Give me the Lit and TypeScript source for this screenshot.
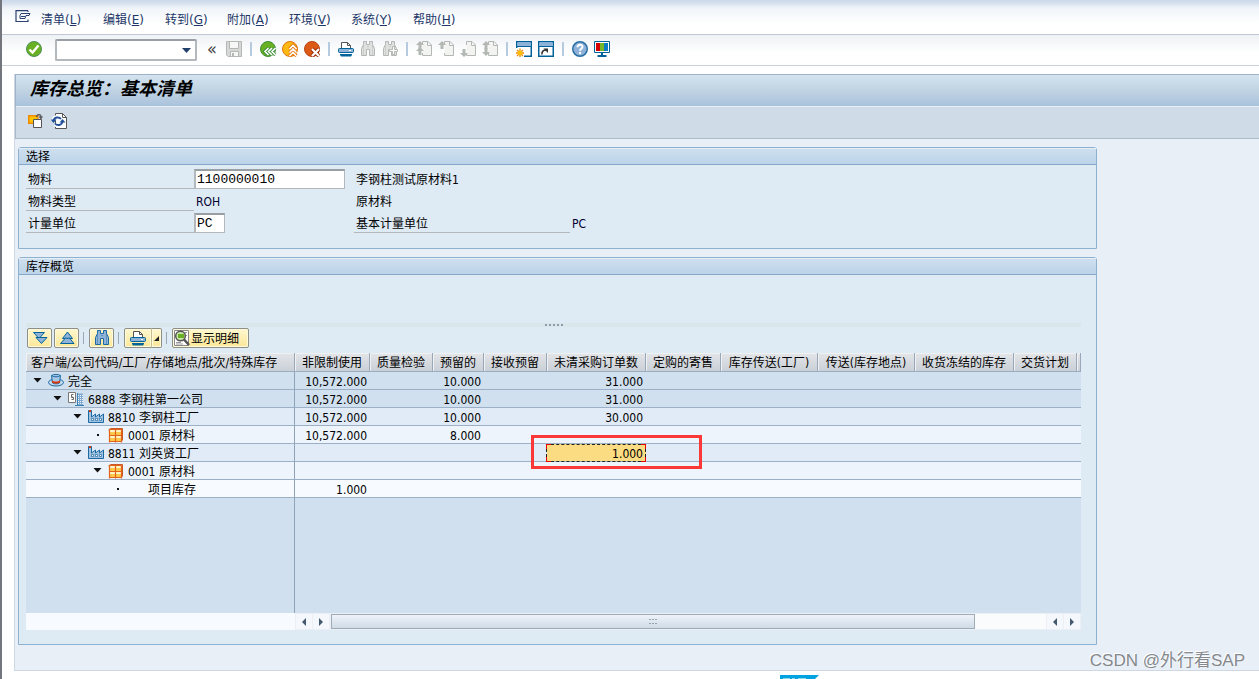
import { LitElement, html, svg, css, nothing } from "lit";
import { customElement } from "lit/decorators.js";

const icon = (body: unknown, w = 16, h = 16) =>
  html`<svg width=${w} height=${h} viewBox="0 0 ${w} ${h}" aria-hidden="true">${body}</svg>`;

const G = "#b4b8b4";
const B = "#00639a";

const pageBody = svg`<path d="M6.5 4V.5H12L15.500 4v10.500H6.500V12M11.500 .5V4.500H15" fill="#f3f3f2" stroke=${G}/>`;
const up = (y: number) => svg`<path d="M4 ${y}l4 4H5.500v4h-3v-4H0z" fill=${G}/>`;
const down = (y: number) => svg`<path d="M4 ${y}l4-4H5.500v-4h-3v4H0z" fill=${G}/>`;

const binoculars = (fill: string, stroke: string) => svg`
  <path d="M3.500 .5h3v3h3v-3h3v3l2 4v7h-5v-6h-3v6h-5v-7l2-4z" fill=${fill} stroke=${stroke}/>
  <path d="M3.500 3.500v11M12.500 3.500v11M7 5.500h2" stroke=${stroke} opacity=".45" fill="none"/>`;

const printer = svg`
  <path d="M3.500 7V1.500h6l3 3V7" fill="#fff" stroke="#555"/><path d="M9.500 1.500v3h3" fill="none" stroke="#555"/>
  <rect x=".5" y="7.500" width="15" height="4" rx="1" fill="#8fb3d8" stroke=${B}/>
  <path d="M11 9.500h2" stroke="#fff"/><path d="M2 13h12v1l-1 1.500H3L2 14z" fill=${B}/>`;

const icons = {
  menu: icon(svg`<path d="M13 .7H1V11.500H13V9.500M13 .7V2" fill="none" stroke="#2a4172" stroke-width="1.200"/>
    <path d="M6 3.500h9l-1 2h-3M6 3.500l-1 2v3h5l1-3M6 6.500h4" fill="none" stroke="#2a4172"/>`),
  check: icon(svg`<circle cx="8" cy="8" r="7.500" fill="#6ab023" stroke="#4d8f5b"/>
    <path d="M3.500 8.500l3 3 6-7" fill="none" stroke="#fff" stroke-width="2.400"/>`),
  save: icon(svg`<path d="M.5 .5h15v15H2L.5 14z" fill="#d6d8d8" stroke=${G}/>
    <path d="M3.500 .5h9v7h-9zM4.500 10.500h8v5h-8z" fill="#f7f7f7" stroke=${G}/><path d="M6 12h2v3H6z" fill=${G}/>`),
  back: icon(svg`<circle cx="8" cy="8" r="7.500" fill="#6ab023" stroke="#3f8f3a"/>
    <path d="M8.500 7L5 10.500 8.500 14M12 7L8.500 10.500 12 14M15.500 7L12 10.500 15.500 14" fill="none" stroke="#3f8f3a" stroke-width="3.500"/>
    <path d="M8.500 7L5 10.500 8.500 14M12 7L8.500 10.500 12 14M15.500 7L12 10.500 15.500 14" fill="none" stroke="#fff" stroke-width="1.600"/>`),
  exit: icon(svg`<circle cx="8" cy="8" r="7.500" fill="#fdb913" stroke="#e5730c"/>
    <path d="M7.500 8L11 4.500 14.500 8M7.500 11.500L11 8l3.500 3.500M7.500 15l3.500-3.500L14.500 15" fill="none" stroke="#e5730c" stroke-width="3.400"/>
    <path d="M7.500 8L11 4.500 14.500 8M7.500 11.500L11 8l3.500 3.500M7.500 15l3.500-3.500L14.500 15" fill="none" stroke="#fff" stroke-width="1.600"/>`),
  cancel: icon(svg`<circle cx="8" cy="8" r="7.500" fill="#dc5a16" stroke="#b8420f"/>
    <path d="M8 8l7 7M15 8l-7 7" stroke="#9e2f0c" stroke-width="4"/><path d="M8 8l7 7M15 8l-7 7" stroke="#fff" stroke-width="2.200"/>`),
  print: icon(printer),
  find: icon(binoculars("#dfe1e1", G)),
  findNext: icon(svg`${binoculars("#dfe1e1", G)}<path d="M10.500 5.500h2v3h3v2h-3v3h-2v-3h-3v-2h3z" fill="#fff" stroke=${G}/>`),
  first: icon(svg`${pageBody}${up(0)}${up(6)}`),
  prev: icon(svg`${pageBody}${up(0)}`),
  next: icon(svg`${pageBody}${down(16)}`),
  last: icon(svg`${pageBody}${up(0)}${down(15)}`),
  newWindow: icon(svg`<rect x=".75" y=".75" width="14.500" height="14.500" fill="#fff" stroke=${B} stroke-width="1.500"/>
    <path d="M1.500 1.500h13V5h-13z" fill="#8fb3d8"/><path d="M1 5.500h14" stroke=${B}/><path d="M0 7h8v9H0z" fill="#fff"/>
    <path d="M4 7.500v9M0 12h8M1 9l6 6M7 9l-6 6" stroke="#f08a00" stroke-width="1.300"/><circle cx="4" cy="12" r="2.200" fill="#fdc300"/>`),
  shortcut: icon(svg`<rect x=".75" y=".75" width="14.500" height="14.500" fill="#fff" stroke=${B} stroke-width="1.500"/>
    <path d="M1.500 1.500h13V5h-13z" fill="#8fb3d8"/><path d="M1 5.500h14" stroke=${B}/>
    <path d="M4 13.500c-.5-3 1.500-4.500 4-4.500" fill="none" stroke="#333" stroke-width="1.600"/><path d="M5.500 7.500H10V12z" fill="#333"/>`),
  help: icon(svg`<circle cx="8" cy="8" r="7.250" fill="#8fb3d8" stroke="#2a6fa5" stroke-width="1.500"/>
    <path d="M5.500 6.300c0-3.400 5-3.200 5-.5 0 2-2.500 1.800-2.500 4" fill="none" stroke="#fff" stroke-width="2"/><path d="M7 11h2v2H7z" fill="#fff"/>`),
  layout: icon(svg`<path d="M.5 .5h15v11H.5z" fill="#fff" stroke=${B}/><path d="M2 2h4v8H2z" fill="#d50000"/><path d="M6 2h4v8H6z" fill="#76b82a"/>
    <path d="M10 2h4v8h-4z" fill="#0a7cc4"/><path d="M7 12h2v2H7z" fill=${B}/><path d="M3.500 15h9" stroke=${B} stroke-width="2"/>`),
  other: icon(svg`<path d="M.75 2.750h9v7.500h-9z" fill="#fdc300" stroke="#f08a00" stroke-width="1.500"/>
    <path d="M5.500 6.500h8v8h-8z" fill="#fff" stroke="#555"/><path d="M8.500 4c.5-3.500 4.500-3 4.500 0" fill="none" stroke="#555" stroke-width="1.200"/>
    <path d="M10.500 3.500H15l-2 3z" fill="#555"/>`),
  refresh: icon(svg`<path d="M4.500 .5h7l4 4v11h-11z" fill="#fff" stroke="#555"/><path d="M11.500 .5v4h4" fill="none" stroke="#555"/>
    <path d="M2 8c.5-4.500 6-5 8-2.500M12 8.500c-.5 4.500-6 5-8 2.500" fill="none" stroke="#fff" stroke-width="4"/>
    <path d="M2.500 8c.5-4 5.500-4.500 7.500-2M11.500 8.500c-.5 4-5.500 4.500-7.500 2" fill="none" stroke="#23509b" stroke-width="2"/>
    <path d="M-.5 6.500h6l-3 3.500zM8.500 9.500h6L11.500 6z" fill="#23509b"/>`),
  expand: icon(svg`<path d="M1.500 2.500h11l-5.500 6z" fill="#8fb3d8" stroke=${B}/><path d="M4 7.500h11l-5.500 6z" fill="#8fb3d8" stroke=${B}/>`),
  collapse: icon(svg`<path d="M3.500 8.500l5-6.500 5 6.500z" fill="#8fb3d8" stroke=${B}/><path d="M1.500 13.500l5.500-6 1.500 1.500 1.500-1.500 5 6z" fill="#8fb3d8" stroke=${B}/>`),
  findBlue: icon(binoculars("#8fb3d8", "#1b6aa3")),
  detail: icon(svg`<path d="M.5 .5h14v15H.5z" fill="#fff" stroke="#888"/><path d="M2 12.500h5M2 14h7M11 2.500h2M11 5.500h2" stroke="#999"/>
    <circle cx="6.500" cy="6" r="4.800" fill="#c9e7a5" stroke="#555" stroke-width="1.500"/><path d="M4 4h6v4H4z" fill="#6ab023"/>
    <path d="M10 9.500l5 5.500" stroke="#555" stroke-width="2.600"/>`),
  hat: icon(svg`<ellipse cx="8" cy="9.500" rx="7.500" ry="3.500" fill="#c4d9ee" stroke="#1b6aa3"/>
    <path d="M3.500 2.500L4.500 10c2 1.200 5 1.200 7 0l1-7.500c-2-1.500-7-1.500-9 0z" fill="#a9c6e3" stroke="#1b6aa3"/><path d="M3.500 2.500c2 1.800 7 1.800 9 0" fill="none" stroke="#1b6aa3"/>
    <path d="M4 7.500c2 1.300 6 1.300 8 0v2c-2 1.500-6 1.500-8 0z" fill="#d8390c"/>`),
  company: icon(svg`<path d="M.5 1.500h7v10h-7z" fill="#fff" stroke="#777"/><path d="M5.500 3.500h-2v2l2 1v2h-2M3.500 5.500v1h2" fill="none" stroke="#666"/>
    <path d="M9 2.500h6V14H9z" fill="#7fa9d2"/><path d="M10.500 4v9M12.500 4v9M14.500 4v9" stroke="#eef5fb" stroke-dasharray="1 1"/>
    <path d="M9.500 2v13M7 14.500h9" stroke="#3b80b5"/>`),
  plant: icon(svg`<path d="M.5 13.500V1.500h3V8l4-3v3l4-3v3l4-3v8.500z" fill="#a3c2e0" stroke="#1b6aa3"/>
    <path d="M1 2h2" stroke="#d8390c" stroke-width="2"/><path d="M3.500 9.500h2v2h-2zM7.500 9.500h2v2h-2zM11.500 9.500h2v2h-2z" fill="#fff" stroke="#1b6aa3" stroke-width=".7"/>`),
  storage: icon(svg`<path d="M2.500 1.500h12v12M2.500 1.500l-2 1.500" fill="none" stroke="#c85a28"/>
    <path d="M1.500 2.500h12v12h-12z" fill="#fff3c8" stroke="#e4611a"/>
    <path d="M2 5h11v3H2zM2 11h11v3H2z" fill="#fdc94a"/>
    <path d="M7.500 2.500v13M1 8.500h13M13.500 2.500v13M1.500 2.500v13" stroke="#e4611a" stroke-width="1.200"/>`),
};

type Row = { level: number; leaf?: boolean; icon?: unknown; label: string; tone: string; values: Record<number, string>; mark?: number };

const columns: [string, number][] = [
  ["非限制使用", 75], ["质量检验", 63], ["预留的", 51], ["接收预留", 63], ["未清采购订单数", 99],
  ["定购的寄售", 75], ["库存传送(工厂)", 97], ["传送(库存地点)", 97], ["收货冻结的库存", 99], ["交货计划", 63],
];

const rows: Row[] = [
  { level: 0, icon: icons.hat, label: "完全", tone: "t0", values: { 0: "10,572.000", 2: "10.000", 4: "31.000" } },
  { level: 1, icon: icons.company, label: "6888 李钢柱第一公司", tone: "t0", values: { 0: "10,572.000", 2: "10.000", 4: "31.000" } },
  { level: 2, icon: icons.plant, label: "8810 李钢柱工厂", tone: "t1", values: { 0: "10,572.000", 2: "10.000", 4: "30.000" } },
  { level: 3, leaf: true, icon: icons.storage, label: "0001 原材料", tone: "t2", values: { 0: "10,572.000", 2: "8.000" } },
  { level: 2, icon: icons.plant, label: "8811 刘英贤工厂", tone: "t1", values: { 4: "1.000" }, mark: 4 },
  { level: 3, icon: icons.storage, label: "0001 原材料", tone: "t2", values: {} },
  { level: 4, leaf: true, label: "项目库存", tone: "t3", values: { 0: "1.000" } },
];

const menus: [string, string][] = [["清单", "L"], ["编辑", "E"], ["转到", "G"], ["附加", "A"], ["环境", "V"], ["系统", "Y"], ["帮助", "H"]];

const base = css`
  * { box-sizing: border-box; }
  button, input, select { font: inherit; color: inherit; margin: 0; padding: 0; }
  button { border: 0; background: none; display: flex; align-items: center; justify-content: center; }
  svg { display: block; flex: none; }
`;

@customElement("stock-tree")
export class StockTree extends LitElement {
  static styles = [base, css`
    :host { display: flex; flex-direction: column; flex: 1; }
    table { width: 100%; table-layout: fixed; border-spacing: 0; border-collapse: separate; }
    .c-tree { width: 269px; }
    th, td { padding: 0; white-space: nowrap; font-weight: normal; }
    th {
      height: 19px; padding-top: 2px; line-height: 16px; text-align: center;
      background: linear-gradient(#e3e5e8, #c9d0d7);
      border-right: 1px solid #98a8b8; border-bottom: 1px solid #98abbf;
      box-shadow: inset 1px 1px 0 #eff1f3;
    }
    th.c-tree { text-align: left; padding-left: 5px; }
    td { height: 18px; padding: 3px 3px 0 0; line-height: 14px; border-bottom: 1px solid #9bb0c6; text-align: right; }
    td.c-tree { padding: 0; border-right: 1px solid #8fa3b8; text-align: left; }
    .t0 { background: #d0e0ee; }
    .t1 { background: #e1ebf7; }
    .t2 { background: #edf4fb; }
    .t3 { background: #f7fbff; }
    .node { display: flex; align-items: center; gap: 4px; height: 17px; }
    .name { padding-top: 3px; }
    .twist { width: 12px; height: 16px; }
    .ico { width: 16px; height: 16px; }
    .marked { position: relative; background: #fcdc82; }
    .focus { position: absolute; inset: 0 0 -1px -1px; border: 1px dashed #222; }
    .focus::before {
      content: ""; position: absolute; inset: -1px;
      background:
        linear-gradient(#e80000 0 0) 0 0 / 5px 1px, linear-gradient(#e80000 0 0) 0 0 / 1px 5px,
        linear-gradient(#e80000 0 0) 100% 0 / 5px 1px, linear-gradient(#e80000 0 0) 100% 0 / 1px 5px,
        linear-gradient(#e80000 0 0) 0 100% / 5px 1px, linear-gradient(#e80000 0 0) 0 100% / 1px 5px,
        linear-gradient(#e80000 0 0) 100% 100% / 5px 1px, linear-gradient(#e80000 0 0) 100% 100% / 1px 5px;
      background-repeat: no-repeat;
    }
    .callout { position: absolute; inset: -9px -56px -8px -16px; border: 3px solid #fb3838; }
    .rest { flex: 1; display: flex; background: #d0e0ee; }
    .rest-tree { width: 269px; border-right: 1px solid #8fa3b8; }
    .scroll { display: flex; height: 17px; }
    .pad { width: 269px; background: #f7fbff; }
    .bar { flex: 1; display: flex; align-items: center; gap: 1px; background: #ecf0f5; padding: 0 1px; }
    .bar button { width: 16px; height: 15px; background: #f4f8fd; }
    .track { flex: 1; align-self: stretch; margin: 1px 0 1px 1px; background: #fafbfc; }
    .thumb {
      width: 90%; height: 15px; display: flex; align-items: center; justify-content: center;
      border: 1px solid #9fabb6; background: linear-gradient(#eef3f9, #cfdbe6);
    }
  `];

  render() {
    const left = icon(svg`<path d="M6 0v8L2 4z" fill="#43586c"/>`, 8, 8);
    const right = icon(svg`<path d="M2 0v8l4-4z" fill="#43586c"/>`, 8, 8);
    return html`
      <table>
        <colgroup><col class="c-tree" />${columns.map(([, w]) => html`<col style="width:${w}px" />`)}<col /></colgroup>
        <thead><tr><th class="c-tree">客户端/公司代码/工厂/存储地点/批次/特殊库存</th>${columns.map(([n]) => html`<th>${n}</th>`)}<th></th></tr></thead>
        <tbody>${rows.map((r) => html`
          <tr class=${r.tone}>
            <td class="c-tree"><div class="node" style="padding-left:${6 + r.level * 20}px">
              ${r.leaf
                ? html`<span class="twist">${icon(svg`<path d="M5 7h2v2H5z" fill="#111"/>`, 12, 16)}</span>`
                : html`<button class="twist" aria-label="折叠">${icon(svg`<path d="M1.500 5h8L5.500 9.500z" fill="#111"/>`, 12, 16)}</button>`}
              <span class="ico">${r.icon ?? nothing}</span><span class="name">${r.label}</span>
            </div></td>
            ${columns.map((_, i) => r.mark === i
              ? html`<td class="marked">${r.values[i]}<div class="focus"></div><div class="callout"></div></td>`
              : html`<td>${r.values[i] ?? nothing}</td>`)}
            <td></td>
          </tr>`)}
        </tbody>
      </table>
      <div class="rest"><div class="rest-tree"></div></div>
      <div class="scroll">
        <div class="pad"></div>
        <div class="bar">
          <button aria-label="向左">${left}</button><button aria-label="向右">${right}</button>
          <div class="track"><div class="thumb">${icon(svg`<path d="M0 1h2v1H0zM3 1h2v1H3zM6 1h2v1H6zM0 5h2v1H0zM3 5h2v1H3zM6 5h2v1H6z" fill="#97a5b2"/>`, 8, 7)}</div></div>
          <button aria-label="向左">${left}</button><button aria-label="向右">${right}</button>
        </div>
      </div>`;
  }
}

@customElement("app-root")
export class AppRoot extends LitElement {
  static styles = [base, css`
    :host {
      display: flex; flex-direction: column; min-height: 100vh; position: relative; overflow: hidden;
      box-sizing: border-box; border-left: 2px solid #73767c; background: #fff; color: #000;
      font: 12px/16px "DejaVu Sans Condensed", "Noto Sans CJK SC", sans-serif;
    }
    .menu {
      display: flex; align-items: center; height: 35px; padding: 6px 0 0 13px;
      background: linear-gradient(#ccd9ea 0, #d5dfed 3px, #f0f4f9 8px, #fff 24px);
      border-bottom: 1px solid #c0c8d1; color: #1d3768;
      font-family: "DejaVu Sans", "Noto Sans CJK SC", sans-serif;
    }
    .menu svg { margin-bottom: 4px; }
    .menu nav { display: grid; grid-auto-flow: column; grid-auto-columns: 62px; margin-left: 10px; }
    .menu a { color: inherit; text-decoration: none; }
    .tools {
      display: flex; align-items: center; gap: 6px; height: 31px; padding: 0 0 2px 24px;
      background: linear-gradient(#eef2f6, #fff 60%); border-bottom: 1px solid #ccd2d9;
    }
    .tools button { width: 16px; height: 16px; }
    .sep { width: 2px; height: 14px; margin: 0 2px; background: #b7cbe0; }
    .command { display: grid; align-items: center; width: 142px; height: 22px; margin: 2px 1px 0 7px; }
    .command > * { grid-area: 1 / 1; }
    .command select { width: 100%; height: 22px; appearance: none; border: 2px solid #b3b8bd; border-top-color: #999fa5; border-radius: 2px; background: #fff; }
    .command svg { justify-self: end; margin-right: 6px; pointer-events: none; }
    .chev { font-size: 18px; line-height: 16px; color: #444; }
    .work { flex: 1; display: flex; flex-direction: column; margin: 8px 0 0 12px; border: solid #cfd6e4; border-width: 0 0 1px 1px; background: #e8eff7; }
    .title { margin: 0; height: 32px; padding-left: 14px; border-top: 1px solid #9fb2c8; border-left: 1px solid #9fb2c8; background: linear-gradient(#d4e3f0, #c0d3e2 50%, #a9c2dc); font-size: 18px; line-height: 28px; font-weight: bold; font-style: italic; }
    .app-tools { display: flex; align-items: center; gap: 7px; height: 33px; padding: 0 0 2px 12px; border: solid #a9bac9; border-width: 0 0 1px 1px; background: #cfdce7; box-shadow: inset 0 1px 0 #e8f0f7; }
    .app-tools button { width: 16px; height: 16px; }
    .content { flex: 1; display: flex; flex-direction: column; gap: 8px; padding: 8px 162px 25px 3px; }
    .group { border: 1px solid #8fb1d0; border-radius: 3px 3px 0 0; background: #deeaf4; }
    .group h2 { margin: 0; height: 17px; padding-left: 7px; font-size: 12px; line-height: 18px; font-weight: normal; background: linear-gradient(#cfe0ef, #bcd3e9); border-bottom: 1px solid #85a7c9; box-shadow: inset 0 1px 0 #e4eef7; }
    .form { display: grid; grid-template-columns: 168px 160px 216px 1fr; grid-auto-rows: 22px; padding: 2px 7px 15px; }
    .form > * { line-height: 27px; padding-left: 2px; }
    .line { border-bottom: 1px solid #b5b8bb; }
    .form .box { align-self: end; height: 20px; padding: 0 1px; border: 2px solid #b3b8bd; border-top-color: #989fa5; border-width: 2px 1px 1px 2px; background: #fff; font: 13px/16px "Liberation Mono", monospace; }
    .form .long { width: 151px; }
    .form .short { width: 31px; }
    .val { color: #000030; }
    .stock { flex: 1; display: flex; flex-direction: column; }
    .stock-body { flex: 1; display: flex; flex-direction: column; padding: 48px 15px 14px 7px; }
    .split { display: flex; justify-content: center; height: 4px; background: #d9e6ea; }
    .alv { display: flex; align-items: center; gap: 2px; padding: 1px 0 5px 1px; }
    .alv button { height: 20px; min-width: 25px; border: 1px solid #8e8f86; border-radius: 2px; background: linear-gradient(#fff8cf, #fbe799); box-shadow: inset 0 0 0 1px #fffadc; }
    .alv .sep { width: 1px; height: 12px; margin: 0 3px 0 2px; background: #9ba9b6; }
    .alv .twin { display: flex; }
    .alv .twin button:first-child { width: 28px; border-radius: 2px 0 0 2px; }
    .alv .twin button:last-child { min-width: 0; width: 11px; margin-left: -1px; border-left-color: #c9bd8b; border-radius: 0 2px 2px 0; }
    .alv .wide { padding: 0 9px 0 1px; gap: 1px; }
    .alv .wide span { padding-top: 2px; }
    .foot { display: flex; justify-content: center; height: 8px; padding: 4px 0 0 337px; }
    .mark { position: absolute; right: 14px; bottom: 6px; font: 17px/24px "Liberation Sans", "Noto Sans CJK SC", sans-serif; color: #85888c; text-shadow: -1px -1px 0 #fff; }
  `];

  render() {
    const btn = (label: string, i: unknown, disabled = false) => html`<button aria-label=${label} ?disabled=${disabled}>${i}</button>`;
    const sep = html`<span class="sep"></span>`;
    return html`
      <header class="menu">${icons.menu}
        <nav>${menus.map(([n, k]) => html`<a href="#">${n}(<u>${k}</u>)</a>`)}</nav>
      </header>
      <div class="tools">
        ${btn("回车", icons.check)}
        <label class="command"><select aria-label="命令"><option></option></select>${icon(svg`<path d="M0 0h9L4.500 5z" fill="#20406a"/>`, 9, 5)}</label>
        <button class="chev" aria-label="收起">«</button>
        ${btn("保存", icons.save, true)}${sep}
        ${btn("返回", icons.back)}${btn("退出", icons.exit)}${btn("取消", icons.cancel)}${sep}
        ${btn("打印", icons.print)}${btn("查找", icons.find, true)}${btn("查找下一个", icons.findNext, true)}${sep}
        ${btn("首页", icons.first, true)}${btn("上页", icons.prev, true)}${btn("下页", icons.next, true)}${btn("末页", icons.last, true)}${sep}
        ${btn("新窗口", icons.newWindow)}${btn("快捷方式", icons.shortcut)}${sep}
        ${btn("帮助", icons.help)}${btn("布局", icons.layout)}
      </div>
      <main class="work">
        <h1 class="title">库存总览：基本清单</h1>
        <div class="app-tools">${btn("其他物料", icons.other)}${btn("刷新", icons.refresh)}</div>
        <div class="content">
          <section class="group">
            <h2>选择</h2>
            <div class="form">
              <label class="line" for="mat">物料</label><input id="mat" class="box long" value="1100000010" /><span>李钢柱测试原材料1</span><span></span>
              <span class="line">物料类型</span><span class="val">ROH</span><span>原材料</span><span></span>
              <label class="line" for="unit">计量单位</label><input id="unit" class="box short" value="PC" /><span class="line">基本计量单位</span><span class="val">PC</span>
            </div>
          </section>
          <section class="group stock">
            <h2>库存概览</h2>
            <div class="stock-body">
              <div class="split">${icon(svg`<path d="M0 1h2v2H0zM4 1h2v2H4zM8 1h2v2H8zM12 1h2v2h-2zM16 1h2v2h-2z" fill="#8c9bab"/>`, 18, 4)}</div>
              <div class="alv">
                ${btn("展开", icons.expand)}${btn("折叠", icons.collapse)}${sep}
                ${btn("查找", icons.findBlue)}${sep}
                <span class="twin">${btn("打印", icons.print)}${btn("打印选项", icon(svg`<path d="M5 5v5H0z" fill="#222"/>`, 5, 14))}</span>${sep}
                <button class="wide">${icons.detail}<span>显示明细</span></button>
              </div>
              <stock-tree></stock-tree>
            </div>
          </section>
        </div>
      </main>
      <footer class="foot">${icon(svg`<path d="M0 0h39l-4 4H0z" fill="#00a3e0"/><path d="M3 3.500h7M12 3.500h3M18 3.500h8" stroke="#8fd6f3"/>`, 39, 4)}</footer>
      <div class="mark">CSDN @外行看SAP</div>`;
  }
}
